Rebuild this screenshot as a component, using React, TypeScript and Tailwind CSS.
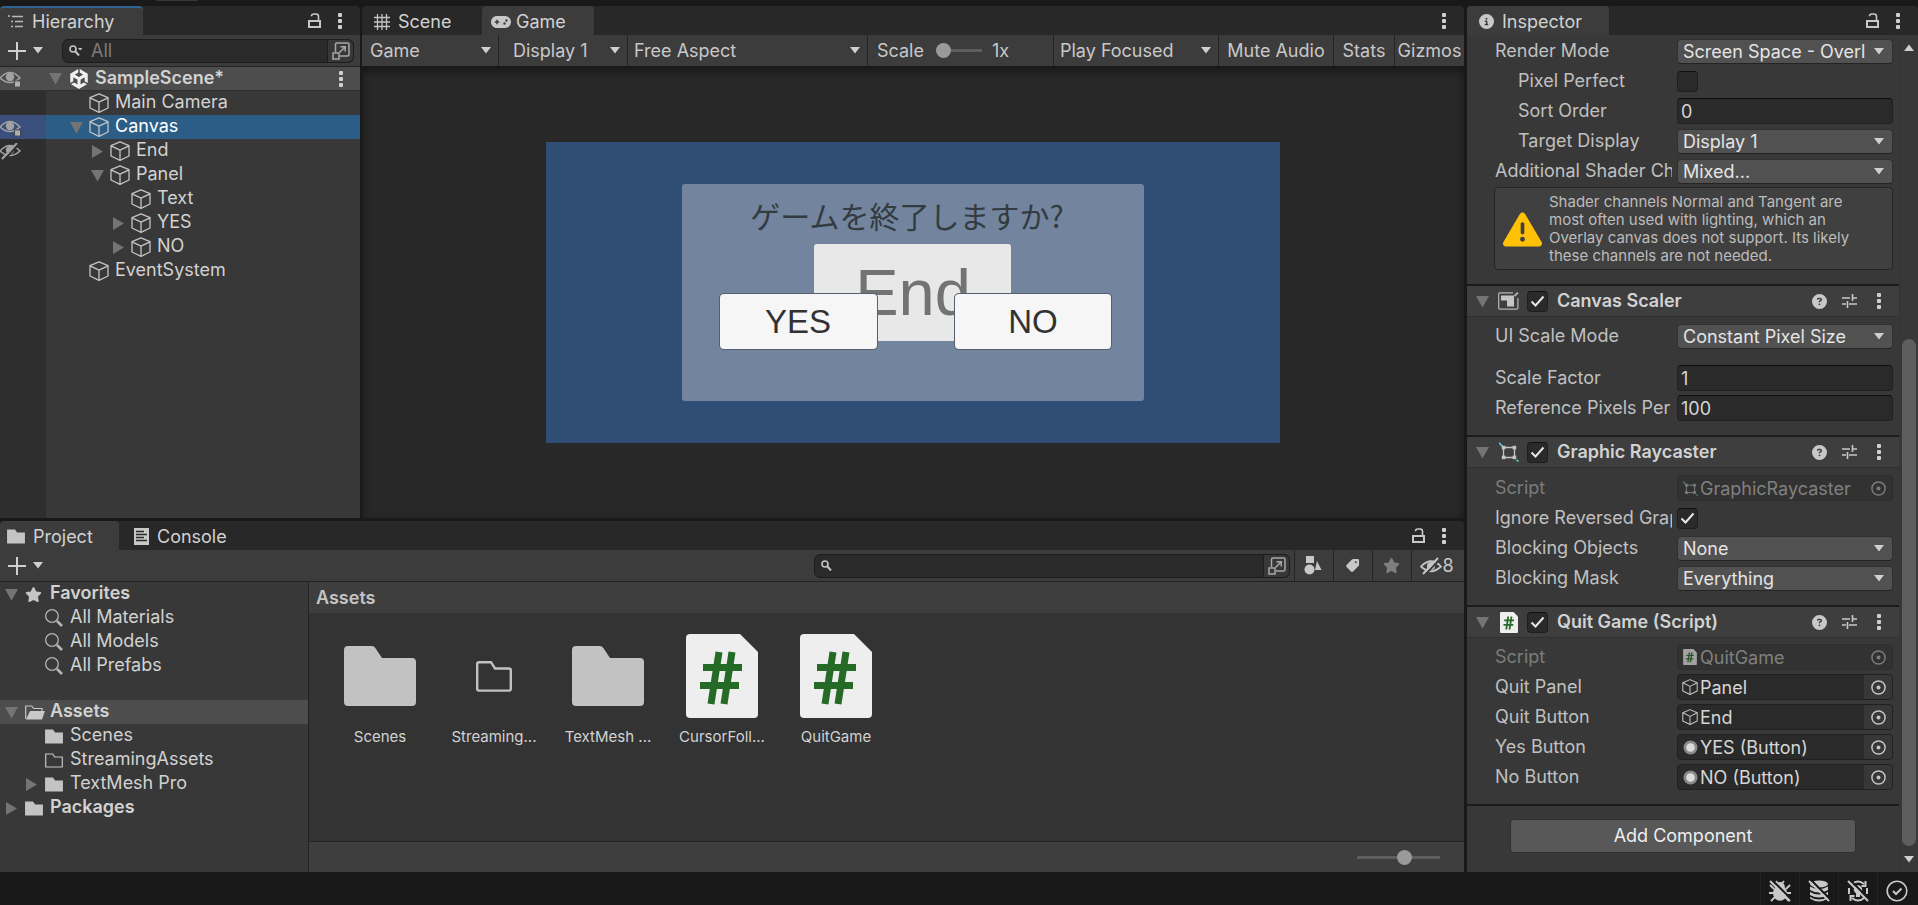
import { useState } from "react";
import type { ReactNode } from "react";
import clsx from "clsx";
import {
  FaCircleInfo,
  FaCircleQuestion,
  FaGamepad,
  FaStar,
  FaTag,
  FaTriangleExclamation,
  FaUnity,
} from "react-icons/fa6";

/* ---------- icons ---------- */

function Foldout({ open }: { open: boolean }) {
  return (
    <svg width="13" height="13" viewBox="0 0 13 13" className="shrink-0" fill="#747474">
      {open ? <path d="M0 1h13L6.500 12.500z" /> : <path d="M1 0v13l11-6.500z" />}
    </svg>
  );
}

function Caret({ className }: { className?: string }) {
  return (
    <svg width="10" height="7" viewBox="0 0 10 7" className={clsx("shrink-0", className)} fill="#d0d0d0">
      <path d="M0 0h10L5 6.500z" />
    </svg>
  );
}

function Cube({ size = 20 }: { size?: number }) {
  return (
    <svg width={size} height={size} viewBox="0 0 20 20" className="shrink-0" fill="none" stroke="#c4c4c4" strokeWidth="1.300" strokeLinejoin="round">
      <path d="M10 .8l9 3.800v10.400l-9 4.300-9-4.300V4.600z" />
      <path d="M1 4.800l9 4.400 9-4.400M10 9.200v10" />
    </svg>
  );
}

function Dots() {
  return (
    <svg width="4" height="16" viewBox="0 0 4 16" className="shrink-0" fill="#d0d0d0">
      <rect width="4" height="4" rx="1" />
      <rect y="6" width="4" height="4" rx="1" />
      <rect y="12" width="4" height="4" rx="1" />
    </svg>
  );
}

function Unlocked() {
  return (
    <svg width="13" height="15" viewBox="0 0 13 15" className="shrink-0" fill="none" stroke="#c8c8c8" strokeWidth="2">
      <rect x="1" y="8" width="11" height="6" />
      <path d="M10.500 8V3.500Q10.500 1 8 1H6Q3.500 1 3.500 3.200" strokeWidth="1.600" />
    </svg>
  );
}

function Plus() {
  return (
    <svg width="18" height="18" viewBox="0 0 18 18" fill="none" stroke="#d0d0d0" strokeWidth="2">
      <path d="M9 0v18M0 9h18" />
    </svg>
  );
}

function SearchGlyph({ menu }: { menu?: boolean }) {
  return (
    <svg width="14" height="11" viewBox="0 0 14 11" className="shrink-0" fill="none" stroke="#c4c4c4" strokeWidth="1.600">
      <circle cx="4" cy="4" r="3" />
      <path d="M6 6l4 4.500" strokeWidth="2" />
      {menu && <path d="M9 3h4.500L11.200 5.600z" fill="#c4c4c4" stroke="none" />}
    </svg>
  );
}

function OpenSearch() {
  return (
    <svg width="18" height="18" viewBox="0 0 18 18" fill="none" stroke="#a8a8a8" strokeWidth="1.500">
      <path d="M3.500 10V2.500Q3.500 1 5 1h10.500Q17 1 17 2.500v10Q17 14 15.500 14H8" />
      <rect x="1" y="11" width="6" height="6" />
      <path d="M7.500 10.500l5.500-5.500M8.500 4.800h4.700v4.700" />
    </svg>
  );
}

function Eye({ off }: { off?: boolean }) {
  return (
    <svg width="22" height="17" viewBox="0 0 22 17" fill="none" stroke="#a2a2a2" strokeWidth="1.500">
      <path d="M0 8Q10 -3 20 8Q10 17 0 8z" />
      <circle cx="10" cy="7" r="4.200" fill="#a2a2a2" stroke="none" />
      {off ? (
        <>
          <path d="M4 17L19 1" stroke="#2e2e2e" strokeWidth="2" />
          <path d="M2 16L17 0" strokeWidth="2" />
        </>
      ) : (
        <rect x="14.500" y="11" width="6" height="6" fill="#b0b0b0" stroke="#3a3a3a" strokeWidth=".8" />
      )}
    </svg>
  );
}

function EyeOff() {
  return (
    <svg width="22" height="18" viewBox="0 0 22 18" fill="none" stroke="#c4c4c4" strokeWidth="1.800">
      <path d="M1 9.500Q11-1 21 9.500Q11 19 1 9.500z" />
      <circle cx="11" cy="9" r="4" fill="#c4c4c4" stroke="none" />
      <path d="M5 18L20 2" stroke="#3c3c3c" strokeWidth="2" />
      <path d="M3 17L18 1" strokeWidth="2" />
    </svg>
  );
}

function Folder({ variant = "solid" }: { variant?: "solid" | "outline" | "open" }) {
  if (variant === "open") {
    return (
      <svg width="20" height="15" viewBox="0 0 20 15" className="shrink-0">
        <path d="M.7 14V1h6l2 2.500H17V6" fill="none" stroke="#c4c4c4" strokeWidth="1.200" />
        <path d="M1 14.500L5 6h15l-3 8.500z" fill="#c8c8c8" />
      </svg>
    );
  }
  return (
    <svg width="18" height="15" viewBox="0 0 18 15" className="shrink-0" fill={variant === "solid" ? "#c4c4c4" : "none"} stroke="#c4c4c4" strokeWidth="1.200">
      <path d="M.7 14V1h7l2 3h7.600v10z" />
    </svg>
  );
}

function BigFolder() {
  return (
    <svg width="72" height="60" viewBox="0 0 72 60" fill="#c2c2c2">
      <path d="M4 0h24q2 0 3 1.500L38 12h30q4 0 4 4v40q0 4-4 4H4q-4 0-4-4V4q0-4 4-4z" />
    </svg>
  );
}

function SmallFolder() {
  return (
    <svg width="36" height="31" viewBox="0 0 36 31" fill="none" stroke="#c2c2c2" strokeWidth="2.400">
      <path d="M3 1.200h12l4 6.300h14q1.800 0 1.800 1.800v18.500q0 1.800-1.800 1.800H3q-1.800 0-1.800-1.800V3Q1.200 1.200 3 1.200z" />
    </svg>
  );
}

function ScriptFile({ width, height, dim }: { width: number; height: number; dim?: boolean }) {
  return (
    <svg width={width} height={height} viewBox="0 0 72 84" className={clsx("shrink-0", dim && "opacity-60")}>
      <path d="M4 0h50l18 18v62q0 4-4 4H4q-4 0-4-4V4q0-4 4-4z" fill="#eeeeee" />
      <path d="M33 18l-8 52M46 18l-8 52" stroke="#256b27" strokeWidth="7" />
      <path d="M17 33.500h39M14 51.500h39" stroke="#256b27" strokeWidth="7" />
    </svg>
  );
}

function ScalerIcon() {
  return (
    <svg width="21" height="18" viewBox="0 0 21 18" fill="none" stroke="#b4b4b4" strokeWidth="1.200">
      <path d="M15 .8H1.500Q.7.800.7 2v14q0 1.200 1 1.200h17q1.200 0 1.200-1.200V6" />
      <path d="M3 3.500h13v11H9V8.500H3z" fill="#c4c4c4" stroke="none" />
      <path d="M16.500 4L20 .6" strokeWidth="1.800" />
    </svg>
  );
}

function RaycasterIcon({ size = 20, dim }: { size?: number; dim?: boolean }) {
  return (
    <svg width={size} height={size} viewBox="0 0 20 20" className={clsx("shrink-0", dim && "opacity-50")} fill="none" stroke="#c4c4c4" strokeWidth="1.300">
      <path d="M4.500 5.500h11v10h-11z" />
      <path d="M0 .8l4 4" stroke="#5cc6dc" strokeWidth="1.800" />
      <path d="M17.500 18l2 1.500" stroke="#49c9a8" strokeWidth="1.800" />
      <g fill="#c4c4c4" stroke="none">
        <rect x="2.800" y="3.800" width="3.600" height="3.600" />
        <rect x="13.600" y="3.800" width="3.600" height="3.600" />
        <rect x="2.800" y="13.600" width="3.600" height="3.600" />
        <rect x="13.600" y="13.600" width="3.600" height="3.600" />
      </g>
    </svg>
  );
}

function Presets() {
  return (
    <svg width="15" height="14" viewBox="0 0 15 14" fill="none" stroke="#c8c8c8" strokeWidth="1.600">
      <path d="M0 4h8M11 4h4M10.500 0v7M0 10h4M7 10h8M5.500 7v7" />
    </svg>
  );
}

function Target({ dim }: { dim?: boolean }) {
  return (
    <svg width="15" height="15" viewBox="0 0 15 15" className={clsx(dim && "opacity-50")} fill="none" stroke="#c4c4c4" strokeWidth="1.500">
      <circle cx="7.500" cy="7.500" r="6.600" />
      <circle cx="7.500" cy="7.500" r="2" fill="#c4c4c4" stroke="none" />
    </svg>
  );
}

function ButtonDot() {
  return (
    <svg width="15" height="15" viewBox="0 0 15 15" className="shrink-0">
      <circle cx="7.500" cy="7.500" r="7" fill="#8a8a8a" />
      <circle cx="7.500" cy="7.500" r="4.300" fill="#dcdcdc" />
    </svg>
  );
}

function HierarchyIcon() {
  return (
    <svg width="16" height="13" viewBox="0 0 16 13" fill="none" stroke="#b8b8b8" strokeWidth="1.400">
      <path d="M0 1h2M4 1.500h11M3 6.500h2M7 6.500h8M3 11.500h2M7 11.500h8" />
    </svg>
  );
}

function SceneIcon() {
  return (
    <svg width="16" height="16" viewBox="0 0 16 16" fill="none" stroke="#c4c4c4" strokeWidth="1.300">
      <path d="M3.500 0v16M8 0v16M12.500 0v16M0 3.500h16M0 8h16M0 12.500h16" />
    </svg>
  );
}

function ConsoleIcon() {
  return (
    <svg width="15" height="17" viewBox="0 0 15 17">
      <rect width="15" height="17" fill="#c8c8c8" />
      <path d="M2 3.500h8M2 6.500h11M2 9.500h8M2 12.500h11" stroke="#282828" strokeWidth="1.300" />
    </svg>
  );
}

function FilterShapes() {
  return (
    <svg width="18" height="19" viewBox="0 0 18 19" fill="#c8c8c8">
      <rect x="2" width="8" height="7" />
      <circle cx="5.500" cy="13.500" r="5" />
      <path d="M13 5l4.500 9H11z" />
    </svg>
  );
}

function FindIcon() {
  return (
    <svg width="18" height="18" viewBox="0 0 18 18" className="shrink-0" fill="none" stroke="#b4b4b4">
      <circle cx="7" cy="7" r="6.300" strokeWidth="1.300" />
      <path d="M12 12l5 5" strokeWidth="2.600" />
    </svg>
  );
}

function StatusSlash() {
  return (
    <>
      <path d="M3 0l20 20" stroke="#191919" strokeWidth="2" />
      <path d="M1 1l20 20" stroke="#c8c8c8" strokeWidth="2" />
    </>
  );
}

function BugOff() {
  return (
    <svg width="22" height="22" viewBox="0 0 22 22" fill="#c8c8c8">
      <ellipse cx="11" cy="13" rx="7" ry="7.800" />
      <path d="M6 7Q7 2 11 2T16 7z" />
      <path d="M7 1l2 2.500M15 1l-2 2.500M1 5l4 4M21 5l-4 4M0 13h5M17 13h5M2 21l4-4M20 21l-4-4" fill="none" stroke="#c8c8c8" strokeWidth="1.800" />
      <StatusSlash />
    </svg>
  );
}

function CacheOff() {
  return (
    <svg width="22" height="22" viewBox="0 0 22 22" fill="#c8c8c8">
      <ellipse cx="11" cy="4" rx="9" ry="3.500" />
      <path d="M2 6.500q9 5 18 0V10q-9 5-18 0zM2 12q9 5 18 0v3q-9 5-18 0zM2 17q9 5 18 0v1.500q-9 6-18 0z" />
      <StatusSlash />
    </svg>
  );
}

function LightingOff() {
  return (
    <svg width="22" height="22" viewBox="0 0 22 22" fill="none" stroke="#c8c8c8" strokeWidth="2">
      <path d="M5 4Q11-1 17 4M5 18Q11 23 17 18M2 8v6M20 8v6M18.500 1v5h-4M3.500 21v-5h4" />
      <circle cx="11" cy="9.500" r="4.200" fill="#c8c8c8" stroke="none" />
      <rect x="9" y="13" width="4" height="4" fill="#c8c8c8" stroke="none" />
      <StatusSlash />
    </svg>
  );
}

function CheckCircle() {
  return (
    <svg width="22" height="22" viewBox="0 0 22 22" fill="none" stroke="#c8c8c8" strokeWidth="1.600">
      <circle cx="11" cy="11" r="9.800" />
      <path d="M7 11l3 3 5.500-5.500" strokeWidth="2" />
    </svg>
  );
}

/* ---------- shared controls ---------- */

function Tab({ active, focused, icon, children, className }: { active?: boolean; focused?: boolean; icon: ReactNode; children: ReactNode; className?: string }) {
  return (
    <button
      className={clsx(
        "flex h-full items-center gap-2 rounded-t border-t-2 text-[#d2d2d2]",
        active ? "bg-[#3c3c3c]" : "bg-transparent",
        focused ? "border-[#2f6292]" : "border-transparent",
        className,
      )}
    >
      {icon}
      {children}
    </button>
  );
}

function TabBar({ children, lock = true }: { children: ReactNode; lock?: boolean }) {
  return (
    <div className="flex h-[29px] shrink-0 items-center rounded-t bg-[#282828]">
      {children}
      <div className="ml-auto flex items-center gap-[17px] pr-[18px]">
        {lock && <button aria-label="Lock"><Unlocked /></button>}
        <button aria-label="Menu"><Dots /></button>
      </div>
    </div>
  );
}

function ToolSelect({ label, options, className, inset = "pl-2" }: { label: string; options: string[]; className?: string; inset?: string }) {
  return (
    <div className={clsx("relative flex h-full items-center border-r border-[#242424]", className)}>
      <select aria-label={label} className={clsx("h-full w-full appearance-none bg-transparent outline-none", inset)}>
        {options.map((o) => (
          <option key={o}>{o}</option>
        ))}
      </select>
      <Caret className="pointer-events-none absolute right-[7px]" />
    </div>
  );
}

function AddMenu() {
  return (
    <button aria-label="Create" className="flex items-center gap-[7px]">
      <Plus />
      <Caret />
    </button>
  );
}

function Check({ id, label, defaultChecked }: { id?: string; label?: string; defaultChecked?: boolean }) {
  const [on, setOn] = useState(!!defaultChecked);
  return (
    <span className="relative flex h-[21px] w-[21px] shrink-0">
      <input
        id={id}
        aria-label={label}
        type="checkbox"
        checked={on}
        onChange={() => setOn(!on)}
        className="h-full w-full appearance-none rounded-sm border border-t-[#101010] border-[#1e1e1e] bg-[#2a2a2a]"
      />
      {on && (
        <svg viewBox="0 0 21 21" className="pointer-events-none absolute inset-0" fill="none" stroke="#e8e8e8" strokeWidth="2">
          <path d="M4.500 10.500l4 4 8-9" />
        </svg>
      )}
    </span>
  );
}

/* ---------- hierarchy ---------- */

const INDENT = ["pl-[3px]", "pl-[24px]", "pl-[45px]", "pl-[66px]"];

type Node = { name: string; depth: number; open?: boolean; eye?: "on" | "off"; selected?: boolean; scene?: boolean };

const SCENE: Node[] = [
  { name: "SampleScene*", depth: 0, open: true, eye: "on", scene: true },
  { name: "Main Camera", depth: 1 },
  { name: "Canvas", depth: 1, open: true, eye: "on", selected: true },
  { name: "End", depth: 2, open: false, eye: "off" },
  { name: "Panel", depth: 2, open: true },
  { name: "Text", depth: 3 },
  { name: "YES", depth: 3, open: false },
  { name: "NO", depth: 3, open: false },
  { name: "EventSystem", depth: 1 },
];

function Hierarchy() {
  return (
    <section className="flex w-[360px] shrink-0 flex-col">
      <TabBar>
        <Tab active focused icon={<HierarchyIcon />} className="w-[143px] pl-2">
          Hierarchy
        </Tab>
      </TabBar>
      <div className="flex h-8 shrink-0 items-center border-b border-[#232323] bg-[#3c3c3c] pr-1.5 pl-2">
        <AddMenu />
        <div className="ml-[19px] flex h-6 flex-1 items-center rounded-md border border-[#1c1c1c] bg-[#2a2a2a] pl-1.5">
          <SearchGlyph menu />
          <input aria-label="Search hierarchy" placeholder="All" className="h-full w-0 flex-1 bg-transparent pl-2 outline-none placeholder:text-[#7c7c7c]" />
          <button aria-label="Open search" className="flex h-full w-[26px] items-center justify-center rounded-r-md border-l border-[#1c1c1c] bg-[#383838]">
            <OpenSearch />
          </button>
        </div>
      </div>
      <ul className="flex flex-1 flex-col bg-[#383838]">
        {SCENE.map((n) => (
          <li key={n.name} className={clsx("flex h-6", n.scene && "border-b border-[#303030] bg-[#4d4d4d] font-semibold", n.selected && "bg-[#2c5d87] text-white")}>
            <span className={clsx("flex w-[46px] items-center", !n.scene && (n.selected ? "bg-[#3b4f7c]" : "bg-[#2e2e2e]"))}>
              {n.eye && <Eye off={n.eye === "off"} />}
            </span>
            <span className={clsx("flex flex-1 items-center", n.scene ? "gap-[7px]" : "gap-1.5", INDENT[n.depth])}>
              <span className="w-[13px]">{n.open !== undefined && <Foldout open={n.open} />}</span>
              <span className="flex items-center gap-1.5">
                {n.scene ? <FaUnity size={20} color="#f0f0f0" /> : <Cube />}
                <span className="pb-0.5">{n.name}</span>
              </span>
            </span>
            {n.scene && (
              <button aria-label="Scene menu" className="pr-[17px]">
                <Dots />
              </button>
            )}
          </li>
        ))}
        <li aria-hidden className="w-[46px] flex-1 bg-[#2e2e2e]" />
      </ul>
    </section>
  );
}

/* ---------- game view ---------- */

function GameView() {
  return (
    <section className="flex min-w-0 flex-1 flex-col">
      <TabBar lock={false}>
        <Tab icon={<SceneIcon />} className="w-[120px] pl-3">
          Scene
        </Tab>
        <Tab active icon={<FaGamepad size={20} color="#c8c8c8" />} className="w-[112px] gap-[5px] pl-[9px]">
          Game
        </Tab>
      </TabBar>
      <div className="flex h-8 shrink-0 items-center border-b border-[#191919] bg-[#3c3c3c] text-[#c8c8c8]">
        <ToolSelect label="View" options={["Game", "Simulator"]} className="w-[137px]" />
        <ToolSelect label="Display" options={["Display 1", "Display 2"]} className="w-[129px]" inset="pl-3.5" />
        <ToolSelect label="Aspect" options={["Free Aspect", "16:9 Aspect"]} className="w-60" inset="pl-1.5" />
        <label className="flex h-full w-[186px] items-center border-r border-[#242424] pl-[9px]">
          Scale
          <input
            type="range"
            defaultValue={0}
            className="mr-2.5 ml-3 h-[15px] w-[46px] appearance-none bg-[linear-gradient(#5e5e5e,#5e5e5e)] bg-[length:100%_3px] bg-center bg-no-repeat [&::-webkit-slider-thumb]:h-[15px] [&::-webkit-slider-thumb]:w-[15px] [&::-webkit-slider-thumb]:appearance-none [&::-webkit-slider-thumb]:rounded-full [&::-webkit-slider-thumb]:bg-[#9a9a9a]"
          />
          1x
        </label>
        <ToolSelect label="Play mode" options={["Play Focused", "Play Maximized"]} className="w-[165px]" inset="pl-1.5" />
        <button className="h-full w-[115px] border-r border-[#242424]">Mute Audio</button>
        <button className="h-full w-[61px] border-r border-[#242424]">Stats</button>
        <button className="h-full flex-1 overflow-hidden">Gizmos</button>
      </div>
      <div className="flex flex-1 items-center justify-center bg-[#282828] shadow-[inset_0_4px_8px_rgba(0,0,0,0.45)]">
        <div className="flex aspect-[734/301] w-2/3 items-center justify-center bg-[#304d76]">
          <div className="relative flex h-[72%] w-[63%] flex-col items-center rounded-[3px] bg-[#73849f]">
            <div className="absolute inset-0 flex items-center justify-center">
              <button className="h-[97px] w-[197px] rounded-[3px] bg-[#e8e8e8] font-['Liberation_Sans',sans-serif] text-[65px] leading-none text-[#737373]">
                End
              </button>
            </div>
            <p className="relative mt-2 pr-3 font-['Noto_Sans_CJK_JP',sans-serif] text-[30px] leading-[46px] text-[#323c40]">ゲームを終了しますか?</p>
            <div className="relative mt-14 flex w-full gap-[78px] pr-[33px] pl-[38px] font-['Liberation_Sans',sans-serif] text-[33px] text-[#323232]">
              <button className="h-[55px] flex-1 rounded bg-[#f6f6f6] shadow-[0_0_0_1px_#53606f]">YES</button>
              <button className="h-[55px] flex-1 rounded bg-[#f6f6f6] shadow-[0_0_0_1px_#53606f]">NO</button>
            </div>
          </div>
        </div>
      </div>
    </section>
  );
}

/* ---------- project ---------- */

const FAVORITES = ["All Materials", "All Models", "All Prefabs"];

const FILES: { name: string; icon: ReactNode }[] = [
  { name: "Scenes", icon: <BigFolder /> },
  { name: "Streaming...", icon: <SmallFolder /> },
  { name: "TextMesh ...", icon: <BigFolder /> },
  { name: "CursorFoll...", icon: <ScriptFile width={72} height={84} /> },
  { name: "QuitGame", icon: <ScriptFile width={72} height={84} /> },
];

function TreeRow({ icon, children, open, depth = 0, selected }: { icon: ReactNode; children: ReactNode; open?: boolean; depth?: number; selected?: boolean }) {
  return (
    <li className={clsx("flex h-6 items-center gap-[7px]", depth ? "pl-[25px]" : "pl-[5px] font-semibold", selected && "bg-[#4d4d4d]")}>
      <span className="w-[13px]">{open !== undefined && <Foldout open={open} />}</span>
      <span className="flex w-[18px]">{icon}</span>
      <span className="pb-0.5">{children}</span>
    </li>
  );
}

function Project() {
  return (
    <section className="flex shrink-0 flex-col">
      <TabBar>
        <Tab active icon={<Folder />} className="w-[119px] gap-1.5 pl-[7px]">
          Project
        </Tab>
        <Tab icon={<ConsoleIcon />} className="pl-[15px]">
          Console
        </Tab>
      </TabBar>
      <div className="flex h-8 items-center border-b border-[#232323] bg-[#3c3c3c] pl-2">
        <AddMenu />
        <div className="mr-1 ml-auto flex h-6 w-[476px] items-center rounded-md border border-[#1c1c1c] bg-[#2a2a2a] pl-1.5">
          <SearchGlyph />
          <input aria-label="Search project" className="h-full w-0 flex-1 bg-transparent outline-none" />
          <button aria-label="Open search" className="flex h-full w-[26px] items-center justify-center rounded-r-md border-l border-[#1c1c1c] bg-[#383838]">
            <OpenSearch />
          </button>
        </div>
        <button aria-label="Search by type" className="flex h-full w-[39px] items-center justify-center border-l border-[#242424] pr-0.5">
          <FilterShapes />
        </button>
        <button aria-label="Search by label" className="flex h-full w-[39px] items-center justify-center border-l border-[#242424] pr-0.5">
          <FaTag size={15} color="#c8c8c8" className="-scale-x-100" />
        </button>
        <button aria-label="Save search" className="flex h-full w-[39px] items-center justify-center border-l border-[#242424] pr-0.5">
          <FaStar size={17} color="#7e7e7e" />
        </button>
        <button aria-label="Hidden packages" className="flex h-full w-[53px] items-center justify-center border-l border-[#242424] pr-0.5 text-[#c8c8c8]">
          <EyeOff />8
        </button>
      </div>
      <div className="flex">
        <nav className="w-[309px] shrink-0 border-r border-[#232323] bg-[#383838] pb-[52px]">
          <ul>
            <TreeRow open icon={<FaStar size={17} color="#c4c4c4" />}>Favorites</TreeRow>
            {FAVORITES.map((f) => (
              <TreeRow key={f} depth={1} icon={<FindIcon />}>{f}</TreeRow>
            ))}
          </ul>
          <ul className="mt-[22px]">
            <TreeRow open selected icon={<Folder variant="open" />}>Assets</TreeRow>
            <TreeRow depth={1} icon={<Folder />}>Scenes</TreeRow>
            <TreeRow depth={1} icon={<Folder variant="outline" />}>StreamingAssets</TreeRow>
            <TreeRow depth={1} open={false} icon={<Folder />}>TextMesh Pro</TreeRow>
            <TreeRow open={false} icon={<Folder />}>Packages</TreeRow>
          </ul>
        </nav>
        <div className="flex min-w-0 flex-1 flex-col bg-[#333333]">
          <h2 className="flex h-[31px] items-center bg-[#3e3e3e] pl-[7px] font-semibold text-[#c4c4c4]">Assets</h2>
          <ul className="flex flex-1 flex-wrap gap-6 pt-[21px] pl-[26px]">
            {FILES.map((f) => (
              <li key={f.name} className="flex w-[90px] flex-col items-center text-[15px] leading-[18px] whitespace-nowrap">
                <span className="mb-2.5 flex h-[84px] items-center">{f.icon}</span>
                {f.name}
              </li>
            ))}
          </ul>
          <div className="flex h-[31px] items-center justify-end border-t border-[#232323] bg-[#3e3e3e] pr-6">
            <input
              type="range"
              aria-label="Icon size"
              defaultValue={59}
              className="h-[15px] w-[83px] appearance-none bg-[linear-gradient(#5e5e5e,#5e5e5e)] bg-[length:100%_3px] bg-center bg-no-repeat [&::-webkit-slider-thumb]:h-[15px] [&::-webkit-slider-thumb]:w-[15px] [&::-webkit-slider-thumb]:appearance-none [&::-webkit-slider-thumb]:rounded-full [&::-webkit-slider-thumb]:bg-[#9a9a9a]"
            />
          </div>
        </div>
      </div>
    </section>
  );
}

/* ---------- inspector ---------- */

function Field({ id, label, indent, dim, children }: { id: string; label: string; indent?: boolean; dim?: boolean; children: ReactNode }) {
  return (
    <div className={clsx("flex h-[30px] items-center pr-1.5", indent ? "pl-[51px]" : "pl-7")}>
      <label htmlFor={id} className={clsx("w-0 flex-1 overflow-hidden whitespace-nowrap", dim ? "text-[#7c7c7c]" : "text-[#c0c0c0]")}>
        {label}
      </label>
      <div className="ml-[5px] w-[216px]">{children}</div>
    </div>
  );
}

function Dropdown({ id, value }: { id: string; value: string }) {
  return (
    <div className="relative flex items-center">
      <select id={id} className="h-[25px] w-full appearance-none overflow-hidden rounded border border-b-[#242424] border-[#303030] bg-[#515151] pr-[26px] pl-[5px] leading-[23px] text-[#e4e4e4] outline-none">
        <option>{value}</option>
      </select>
      <Caret className="pointer-events-none absolute right-[9px]" />
    </div>
  );
}

function NumberBox({ id, value }: { id: string; value: string }) {
  return (
    <input id={id} defaultValue={value} className="block h-[26px] w-full rounded border border-t-[#0d0d0d] border-[#212121] bg-[#2a2a2a] px-[3px] text-[#d6d6d6] outline-none" />
  );
}

function ObjectBox({ id, value, icon, dim }: { id: string; value: string; icon: ReactNode; dim?: boolean }) {
  return (
    <div className={clsx("flex h-[26px] items-center overflow-hidden rounded border", dim ? "border-[#2e2e2e] bg-[#323232] text-[#808080]" : "border-[#202020] bg-[#2a2a2a] text-[#d6d6d6]")}>
      <span className="flex w-[22px] shrink-0 justify-center pl-0.5">{icon}</span>
      <input id={id} readOnly disabled={dim} value={value} className="h-full w-0 flex-1 bg-transparent outline-none" />
      <button aria-label="Pick object" className={clsx("flex h-full w-[28px] items-center justify-center", !dim && "bg-[#373737]")}>
        <Target dim={dim} />
      </button>
    </div>
  );
}

function Component({ title, icon, children }: { title: string; icon: ReactNode; children: ReactNode }) {
  return (
    <section className="border-t-2 border-[#1c1c1c]">
      <header className="flex h-[31px] items-center border-b border-[#303030] bg-[#3e3e3e] pr-[18px] pl-[9px]">
        <Foldout open />
        <span className="mr-2 ml-[9px] flex w-[21px] justify-center">{icon}</span>
        <Check label={`Enable ${title}`} defaultChecked />
        <h3 className="ml-[9px] font-semibold text-[#d2d2d2]">{title}</h3>
        <div className="ml-auto flex items-center gap-[15px]">
          <button aria-label="Help"><FaCircleQuestion size={15} color="#c8c8c8" /></button>
          <button aria-label="Presets"><Presets /></button>
          <button aria-label="Component menu" className="pl-[5px]"><Dots /></button>
        </div>
      </header>
      {children}
    </section>
  );
}

function Inspector() {
  return (
    <aside className="flex w-[451px] shrink-0 flex-col">
      <TabBar>
        <Tab active icon={<FaCircleInfo size={15} color="#c8c8c8" />} className="w-[142px] pl-3">
          Inspector
        </Tab>
      </TabBar>
      <div className="flex min-h-0 flex-1 bg-[#383838]">
        <div className="min-w-0 flex-1">
          <div className="pt-px pb-3.5">
            <Field id="render-mode" label="Render Mode">
              <Dropdown id="render-mode" value="Screen Space - Overlay" />
            </Field>
            <Field id="pixel-perfect" label="Pixel Perfect" indent>
              <Check id="pixel-perfect" />
            </Field>
            <Field id="sort-order" label="Sort Order" indent>
              <NumberBox id="sort-order" value="0" />
            </Field>
            <Field id="target-display" label="Target Display" indent>
              <Dropdown id="target-display" value="Display 1" />
            </Field>
            <Field id="shader-channels" label="Additional Shader Channels">
              <Dropdown id="shader-channels" value="Mixed..." />
            </Field>
            <div className="mt-px mr-1.5 ml-[27px] flex items-center gap-[7px] rounded border border-[#242424] bg-[#404040] pt-[5px] pb-1 pl-2 text-[15px] leading-[18px] text-[#bcbcbc]">
              <FaTriangleExclamation size={39} color="#ffc107" className="shrink-0" />
              <p className="flex-1 pr-5">
                Shader channels Normal and Tangent are most often used with lighting, which an Overlay canvas does not support. Its likely these channels are not needed.
              </p>
            </div>
          </div>

          <Component title="Canvas Scaler" icon={<ScalerIcon />}>
            <div className="pt-1 pb-3">
              <Field id="scale-mode" label="UI Scale Mode">
                <Dropdown id="scale-mode" value="Constant Pixel Size" />
              </Field>
              <div className="mt-3">
                <Field id="scale-factor" label="Scale Factor">
                  <NumberBox id="scale-factor" value="1" />
                </Field>
                <Field id="ppu" label="Reference Pixels Per Unit">
                  <NumberBox id="ppu" value="100" />
                </Field>
              </div>
            </div>
          </Component>

          <Component title="Graphic Raycaster" icon={<RaycasterIcon />}>
            <div className="pt-[5px] pb-3">
              <Field id="ray-script" label="Script" dim>
                <ObjectBox id="ray-script" value="GraphicRaycaster" icon={<RaycasterIcon size={15} dim />} dim />
              </Field>
              <Field id="ignore-reversed" label="Ignore Reversed Graphics">
                <Check id="ignore-reversed" defaultChecked />
              </Field>
              <Field id="blocking-objects" label="Blocking Objects">
                <Dropdown id="blocking-objects" value="None" />
              </Field>
              <Field id="blocking-mask" label="Blocking Mask">
                <Dropdown id="blocking-mask" value="Everything" />
              </Field>
            </div>
          </Component>

          <Component title="Quit Game (Script)" icon={<ScriptFile width={18} height={21} />}>
            <div className="pt-1 pb-3">
              <Field id="quit-script" label="Script" dim>
                <ObjectBox id="quit-script" value="QuitGame" icon={<ScriptFile width={14} height={16} dim />} dim />
              </Field>
              <Field id="quit-panel" label="Quit Panel">
                <ObjectBox id="quit-panel" value="Panel" icon={<Cube size={16} />} />
              </Field>
              <Field id="quit-button" label="Quit Button">
                <ObjectBox id="quit-button" value="End" icon={<Cube size={16} />} />
              </Field>
              <Field id="yes-button" label="Yes Button">
                <ObjectBox id="yes-button" value="YES (Button)" icon={<ButtonDot />} />
              </Field>
              <Field id="no-button" label="No Button">
                <ObjectBox id="no-button" value="NO (Button)" icon={<ButtonDot />} />
              </Field>
            </div>
          </Component>

          <div className="flex justify-center border-t-2 border-[#1c1c1c] pt-[13px]">
            <button className="h-[34px] w-4/5 rounded border border-[#303030] bg-[#585858] text-[#eeeeee]">Add Component</button>
          </div>
        </div>

        <div className="flex w-[19px] shrink-0 flex-col items-center border-l border-[#343434] py-[9px]">
          <Caret className="rotate-180" />
          <div className="mt-[288px] mb-2.5 w-3.5 flex-1 rounded-full bg-[#5e5e5e]" />
          <Caret />
        </div>
      </div>
    </aside>
  );
}

/* ---------- app ---------- */

const STATUS: { label: string; icon: ReactNode }[] = [
  { label: "Debug mode", icon: <BugOff /> },
  { label: "Cache server", icon: <CacheOff /> },
  { label: "Auto lighting", icon: <LightingOff /> },
  { label: "Progress", icon: <CheckCircle /> },
];

export default function App() {
  return (
    <div className="flex h-screen flex-col overflow-hidden bg-[#191919] font-[Inter,sans-serif] text-[18px] leading-6 text-[#d2d2d2]">
      <div className="h-1.5 shrink-0 pl-[156px]">
        <div className="h-px w-[42px] rounded-b bg-[#383838]" />
      </div>
      <div className="flex min-h-0 flex-1 gap-[3px]">
        <div className="flex min-w-0 flex-1 flex-col gap-[3px]">
          <div className="flex min-h-0 flex-1 gap-0.5">
            <Hierarchy />
            <GameView />
          </div>
          <Project />
        </div>
        <Inspector />
      </div>
      <footer className="flex h-[33px] shrink-0 justify-end pr-0.5">
        {STATUS.map((s) => (
          <button key={s.label} aria-label={s.label} className="flex w-[39px] items-center justify-center border-l border-[#222222] pt-1">
            {s.icon}
          </button>
        ))}
      </footer>
    </div>
  );
}
